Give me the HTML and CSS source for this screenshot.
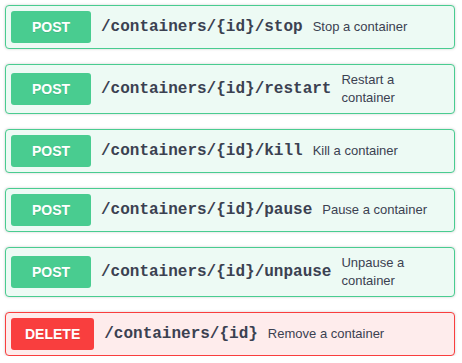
FILE: index.html
```html
<!DOCTYPE html>
<html>
<head>
<meta charset="utf-8">
<link rel="stylesheet" href="styles.css">
</head>
<body>
<div class="list">
  <div class="op post">
    <span class="method">POST</span>
    <span class="path">/containers/{id}/stop</span>
    <span class="desc">Stop a container</span>
  </div>
  <div class="op post">
    <span class="method">POST</span>
    <span class="path">/containers/{id}/restart</span>
    <span class="desc">Restart a container</span>
  </div>
  <div class="op post">
    <span class="method">POST</span>
    <span class="path">/containers/{id}/kill</span>
    <span class="desc">Kill a container</span>
  </div>
  <div class="op post">
    <span class="method">POST</span>
    <span class="path">/containers/{id}/pause</span>
    <span class="desc">Pause a container</span>
  </div>
  <div class="op post">
    <span class="method">POST</span>
    <span class="path">/containers/{id}/unpause</span>
    <span class="desc">Unpause a container</span>
  </div>
  <div class="op delete">
    <span class="method">DELETE</span>
    <span class="path">/containers/{id}</span>
    <span class="desc">Remove a container</span>
  </div>
</div>
</body>
</html>
```

FILE: styles.css
```css
html, body {
  margin: 0;
  padding: 0;
  background: #ffffff;
}
body {
  padding: 5px 7px 0 5px;
  font-family: "Liberation Sans", Arial, sans-serif;
}
.list {
  display: flex;
  flex-direction: column;
  gap: 15px;
}
.op {
  display: flex;
  align-items: center;
  padding: 5px;
  border: 1px solid #49cc90;
  border-radius: 4px;
  background: #edfaf4;
  box-shadow: 0 0 3px rgba(0, 0, 0, 0.19);
}
.op.delete {
  border-color: #f93e3e;
  background: #feecec;
}
.method {
  flex: none;
  min-width: 80px;
  box-sizing: border-box;
  padding: 6px 14px;
  border-radius: 3px;
  background: #49cc90;
  color: #ffffff;
  font-size: 14px;
  font-weight: 700;
  line-height: 20px;
  text-align: center;
  text-shadow: 0 1px 0 rgba(0, 0, 0, 0.1);
}
.delete .method {
  background: #f93e3e;
}
.path {
  flex: none;
  padding: 0 10px;
  font-family: "Liberation Mono", "Courier New", monospace;
  font-weight: 700;
  font-size: 16px;
  color: #3b4151;
}
.desc {
  flex: 1 1 auto;
  padding: 1px 0;
  font-size: 13px;
  line-height: 18px;
  color: #3b4151;
}
```
